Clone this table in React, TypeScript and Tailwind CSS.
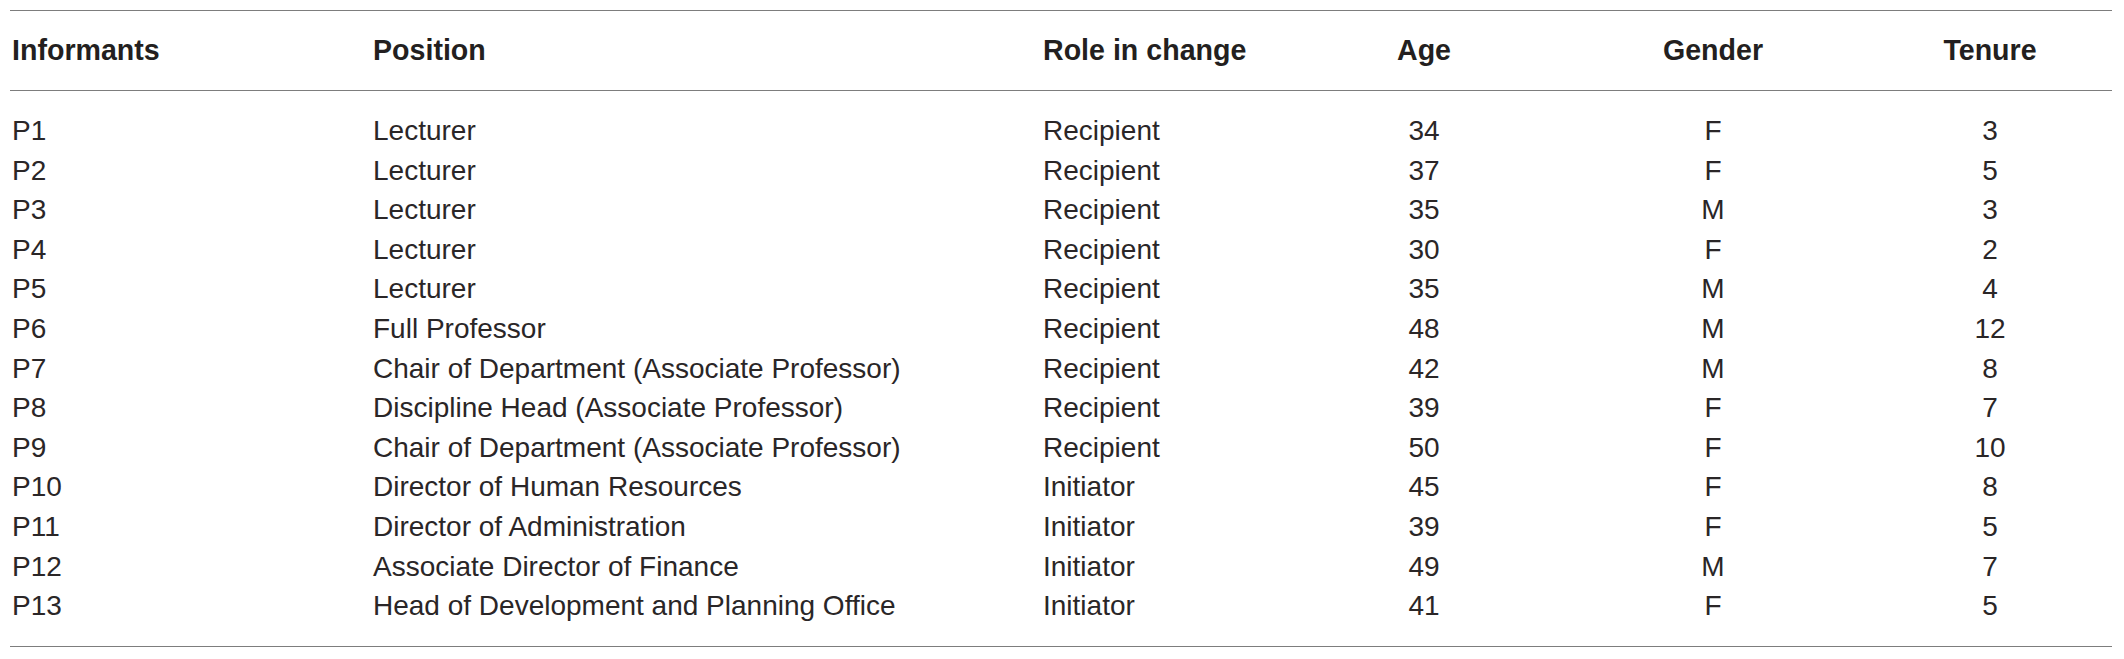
const rows = [
  { id: 'P1', position: 'Lecturer', role: 'Recipient', age: 34, gender: 'F', tenure: 3 },
  { id: 'P2', position: 'Lecturer', role: 'Recipient', age: 37, gender: 'F', tenure: 5 },
  { id: 'P3', position: 'Lecturer', role: 'Recipient', age: 35, gender: 'M', tenure: 3 },
  { id: 'P4', position: 'Lecturer', role: 'Recipient', age: 30, gender: 'F', tenure: 2 },
  { id: 'P5', position: 'Lecturer', role: 'Recipient', age: 35, gender: 'M', tenure: 4 },
  { id: 'P6', position: 'Full Professor', role: 'Recipient', age: 48, gender: 'M', tenure: 12 },
  { id: 'P7', position: 'Chair of Department (Associate Professor)', role: 'Recipient', age: 42, gender: 'M', tenure: 8 },
  { id: 'P8', position: 'Discipline Head (Associate Professor)', role: 'Recipient', age: 39, gender: 'F', tenure: 7 },
  { id: 'P9', position: 'Chair of Department (Associate Professor)', role: 'Recipient', age: 50, gender: 'F', tenure: 10 },
  { id: 'P10', position: 'Director of Human Resources', role: 'Initiator', age: 45, gender: 'F', tenure: 8 },
  { id: 'P11', position: 'Director of Administration', role: 'Initiator', age: 39, gender: 'F', tenure: 5 },
  { id: 'P12', position: 'Associate Director of Finance', role: 'Initiator', age: 49, gender: 'M', tenure: 7 },
  { id: 'P13', position: 'Head of Development and Planning Office', role: 'Initiator', age: 41, gender: 'F', tenure: 5 },
];

const cols = 'grid grid-cols-[361px_670px_247px_268px_310px_244px] pl-[2px]';

export default function App() {
  return (
    <div className="min-h-screen bg-white pt-[10px] pl-[10px] text-[28px] text-[#231f20] [font-family:'Liberation_Sans',Arial,sans-serif]">
      <div className="w-[2102px]">
        {/* Header */}
        <div className="h-px bg-[#7d7d7d]" />
        <div className={`${cols} h-[79px] items-center text-[28.6px] font-bold`}>
          <div>Informants</div>
          <div>Position</div>
          <div>Role in change</div>
          <div className="text-center">Age</div>
          <div className="text-center">Gender</div>
          <div className="text-center">Tenure</div>
        </div>
        <div className="h-px bg-[#7d7d7d]" />

        {/* Body */}
        <div className="pt-[20px] pb-[20px] text-[#2a2627]">
          {rows.map((r) => (
            <div key={r.id} className={`${cols} h-[39.6px] items-center leading-[39.6px]`}>
              <div>{r.id}</div>
              <div>{r.position}</div>
              <div>{r.role}</div>
              <div className="text-center">{r.age}</div>
              <div className="text-center">{r.gender}</div>
              <div className="text-center">{r.tenure}</div>
            </div>
          ))}
        </div>
        <div className="h-px bg-[#7d7d7d]" />
      </div>
    </div>
  );
}
